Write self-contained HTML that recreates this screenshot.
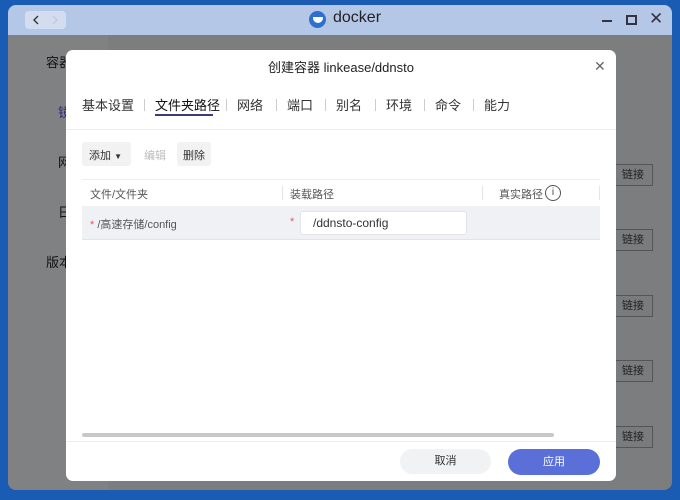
<!DOCTYPE html>
<html><head><meta charset="utf-8"><style>
*{margin:0;padding:0;box-sizing:border-box}
body{width:680px;height:500px;overflow:hidden;background:#1a5cb3;font-family:"Liberation Sans","Noto Sans CJK SC",sans-serif;position:relative}
.abs{position:absolute}
.win{left:8px;top:5px;width:664px;height:485px;background:#7c7d7f;border-radius:8px;overflow:hidden}
.title{left:0;top:0;width:664px;height:30px;background:#b5c7e6}
.side{left:0;top:30px;width:100px;height:455px;background:#808183}
.modal{left:66px;top:50px;width:550px;height:431px;background:#fff;border-radius:7px;overflow:hidden}
.t{position:absolute;white-space:nowrap}
.lk{left:608px;width:37px;height:22px;border:1px solid #555;background:#7a7b7d;font-size:11px;color:#222;line-height:20px;padding-left:6px;border-left:none}
</style></head><body>
<div class="abs win">
 <div class="abs title">
  <div class="abs" style="left:17px;top:6px;width:41px;height:18px;background:#d3ddef;border-radius:4px"></div>
  <svg class="abs" style="left:17px;top:6px" width="41" height="18"><path d="M13 5 L9 9 L13 13" fill="none" stroke="#333" stroke-width="1.4"/><path d="M28 5 L32 9 L28 13" fill="none" stroke="#c3cbd8" stroke-width="1.4"/></svg>
  <div class="abs" style="left:301px;top:6px;width:17px;height:17px;border-radius:50%;background:#2f6fcf"></div>
  <div class="abs" style="left:305px;top:12px;width:10px;height:6px;border-radius:0 0 5px 5px;background:#fff"></div>
  <div class="t" style="left:325px;top:4px;font-size:16px;color:#222">docker</div>
  <div class="abs" style="left:594px;top:15px;width:10px;height:2px;background:#334"></div>
  <div class="abs" style="left:618px;top:10px;width:11px;height:10px;border:2px solid #334"></div>
  <div class="t" style="left:641px;top:4px;font-size:17px;color:#334">&#10005;</div>
 </div>
 <div class="abs side"></div>
 <div class="t" style="left:38px;top:47px;font-size:13px;color:#111">容器</div>
 <div class="t" style="left:50px;top:97px;font-size:13px;color:#2d2a7a">镜</div>
 <div class="t" style="left:50px;top:147px;font-size:13px;color:#111">网</div>
 <div class="t" style="left:50px;top:197px;font-size:13px;color:#111">日</div>
 <div class="t" style="left:38px;top:247px;font-size:13px;color:#111">版本</div>
 <div class="abs lk" style="top:159px">链接</div>
 <div class="abs lk" style="top:224px">链接</div>
 <div class="abs lk" style="top:290px">链接</div>
 <div class="abs lk" style="top:355px">链接</div>
 <div class="abs lk" style="top:421px">链接</div>
</div>
<div class="abs modal">
 <div class="t" style="left:0;width:550px;text-align:center;top:7px;font-size:13px;color:#222">创建容器 linkease/ddnsto</div>
 <div class="t" style="left:528px;top:8px;font-size:14px;color:#666">&#10005;</div>
 <div class="t" style="left:16px;top:45px;font-size:13px;color:#333">基本设置</div>
 <div class="t" style="left:89px;top:45px;font-size:13px;color:#111">文件夹路径</div>
 <div class="abs" style="left:89px;top:64px;width:58px;height:2px;background:#3d3a7a"></div>
 <div class="t" style="left:171px;top:45px;font-size:13px;color:#333">网络</div>
 <div class="t" style="left:221px;top:45px;font-size:13px;color:#333">端口</div>
 <div class="t" style="left:270px;top:45px;font-size:13px;color:#333">别名</div>
 <div class="t" style="left:320px;top:45px;font-size:13px;color:#333">环境</div>
 <div class="t" style="left:369px;top:45px;font-size:13px;color:#333">命令</div>
 <div class="t" style="left:418px;top:45px;font-size:13px;color:#333">能力</div>
 <div class="abs" style="left:78px;top:49px;width:1px;height:12px;background:#ccc"></div>
 <div class="abs" style="left:160px;top:49px;width:1px;height:12px;background:#ccc"></div>
 <div class="abs" style="left:210px;top:49px;width:1px;height:12px;background:#ccc"></div>
 <div class="abs" style="left:259px;top:49px;width:1px;height:12px;background:#ccc"></div>
 <div class="abs" style="left:309px;top:49px;width:1px;height:12px;background:#ccc"></div>
 <div class="abs" style="left:358px;top:49px;width:1px;height:12px;background:#ccc"></div>
 <div class="abs" style="left:407px;top:49px;width:1px;height:12px;background:#ccc"></div>
 <div class="abs" style="left:0;top:79px;width:550px;height:1px;background:#eee"></div>
 <div class="abs" style="left:16px;top:92px;width:49px;height:24px;background:#f2f2f3;border-radius:3px"></div>
 <div class="t" style="left:23px;top:97px;font-size:11px;color:#333">添加 <span style="font-size:8px">&#9660;</span></div>
 <div class="t" style="left:78px;top:97px;font-size:11px;color:#bbb">编辑</div>
 <div class="abs" style="left:111px;top:92px;width:34px;height:24px;background:#f2f2f3;border-radius:3px"></div>
 <div class="t" style="left:117px;top:97px;font-size:11px;color:#333">删除</div>
 <div class="abs" style="left:16px;top:129px;width:518px;height:1px;background:#eee"></div>
 <div class="t" style="left:24px;top:136px;font-size:11px;color:#555">文件/文件夹</div>
 <div class="abs" style="left:216px;top:136px;width:1px;height:14px;background:#e5e5e5"></div>
 <div class="t" style="left:224px;top:136px;font-size:11px;color:#555">装载路径</div>
 <div class="abs" style="left:416px;top:136px;width:1px;height:14px;background:#e5e5e5"></div>
 <div class="t" style="left:433px;top:136px;font-size:11px;color:#555">真实路径</div>
 <div class="abs" style="left:479px;top:135px;width:16px;height:16px;border:1px solid #555;border-radius:50%;font-size:10px;text-align:center;line-height:14px;color:#444">i</div>
 <div class="abs" style="left:533px;top:136px;width:1px;height:14px;background:#e5e5e5"></div>
 <div class="abs" style="left:16px;top:156px;width:518px;height:34px;background:#f0f1f5;border-bottom:1px solid #e3e3e8"></div>
 <div class="t" style="left:24px;top:166px;font-size:11px;color:#555"><span style="color:#e55">*</span> /高速存储/config</div>
 <div class="t" style="left:224px;top:166px;font-size:11px;color:#e55">*</div>
 <div class="abs" style="left:234px;top:161px;width:167px;height:24px;background:#fff;border:1px solid #e4e4e8;border-radius:3px"></div>
 <div class="t" style="left:247px;top:166px;font-size:12px;color:#333">/ddnsto-config</div>
 <div class="abs" style="left:16px;top:383px;width:472px;height:4px;background:#c8c8c8;border-radius:2px"></div>
 <div class="abs" style="left:0;top:391px;width:550px;height:1px;background:#eee"></div>
 <div class="abs" style="left:334px;top:399px;width:91px;height:25px;background:#f1f2f4;border-radius:13px;text-align:center;line-height:25px;font-size:11px;color:#333">取消</div>
 <div class="abs" style="left:442px;top:399px;width:92px;height:26px;background:#5b6fd9;border-radius:13px;text-align:center;line-height:26px;font-size:11px;color:#fff">应用</div>
</div>
</body></html>
